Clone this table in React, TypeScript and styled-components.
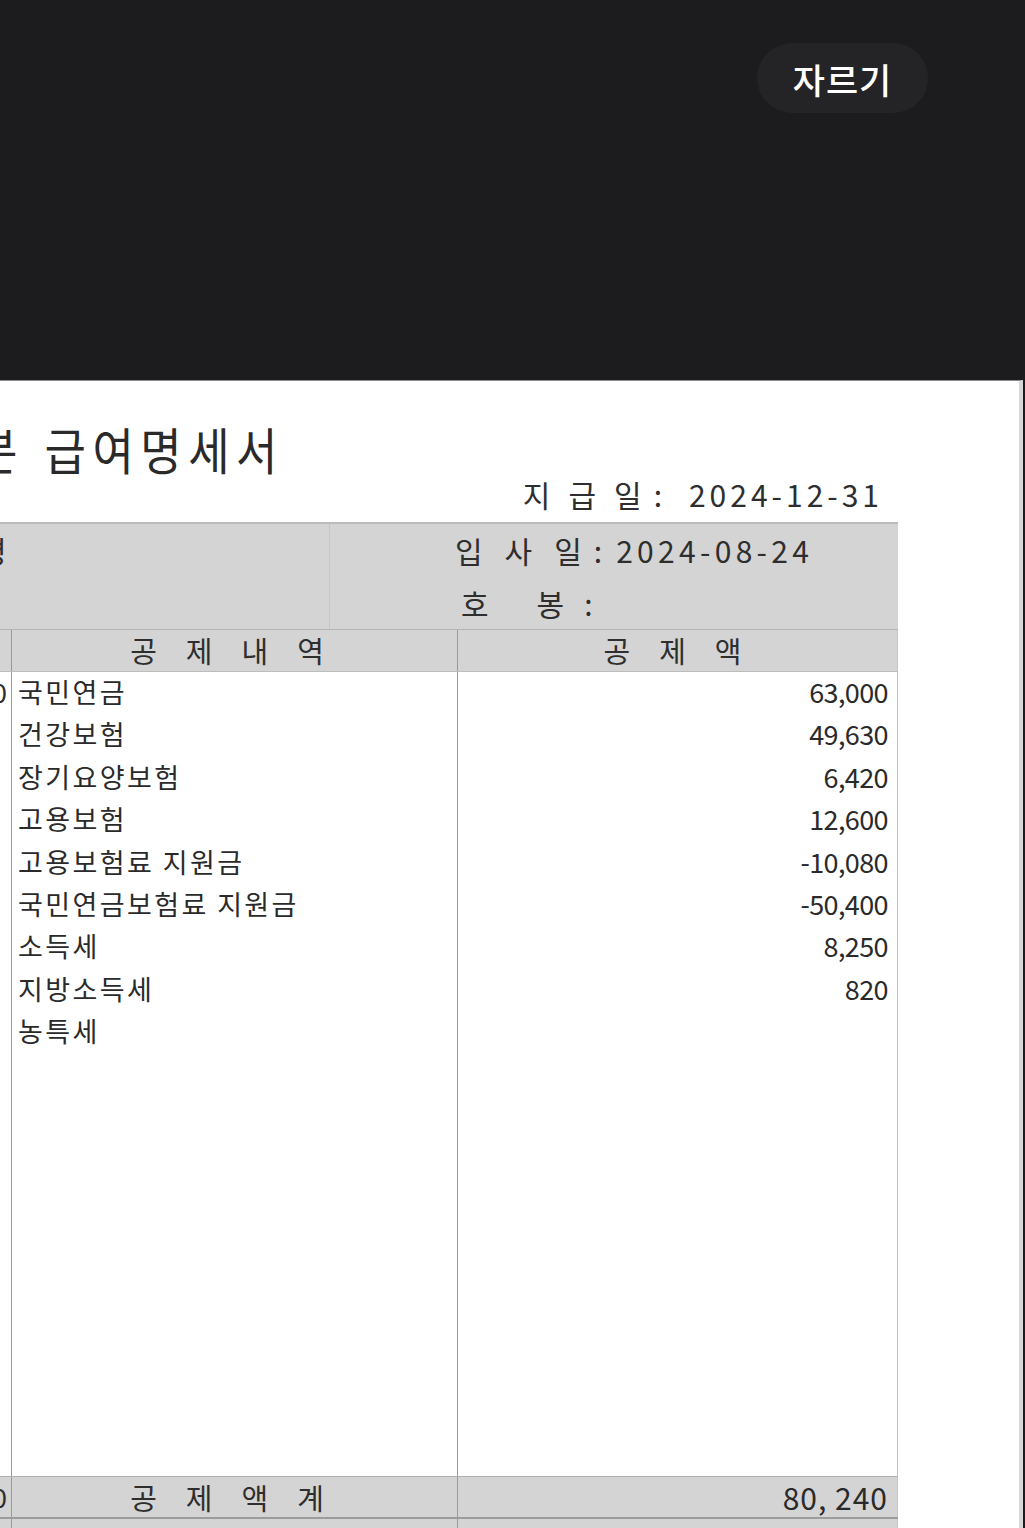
import React from "react";
import styled, { createGlobalStyle } from "styled-components";

const Global = createGlobalStyle`
  html, body { margin: 0; padding: 0; background: #1c1c1e; }
  body { font-family: "Noto Sans CJK KR", "Noto Sans", sans-serif; }
  * { box-sizing: border-box; }
`;

const Screen = styled.div`
  width: 1025px;
  height: 1528px;
  overflow: hidden;
  background: #1c1c1e;
  display: flex;
  flex-direction: column;
`;

const TopBar = styled.header`
  height: 380px;
  flex-shrink: 0;
  display: flex;
  justify-content: flex-end;
  align-items: flex-start;
  padding: 43px 97px 0 0;
`;

const CropButton = styled.button`
  width: 171px;
  height: 70px;
  border-radius: 35px;
  border: none;
  background: #242426;
  color: #ffffff;
  font-family: "Noto Sans CJK KR", sans-serif;
  font-size: 35px;
  font-weight: 500;
  letter-spacing: 1px;
  padding: 0;
`;

const Paper = styled.main`
  flex: 1;
  background: #ffffff;
  border-top: 1px solid #8e8e8e;
  border-right: 4px solid #d8d8d8;
  margin-right: 2px;
  overflow: hidden;
  color: #2e2e2e;
`;

const Sheet = styled.div`
  margin-left: -100px;
  width: 998px;
`;

const TitleRow = styled.h1`
  margin: 42px 0 0;
  padding-left: 76px;
  height: 53px;
  font-size: 45px;
  font-weight: 400;
  line-height: 53px;
  white-space: nowrap;
  color: #2a2a2a;
`;

const TitleText = styled.span`
  display: inline-block;
  letter-spacing: 6.5px;
  word-spacing: 4px;
  transform: scaleY(1.1);
  transform-origin: 50% 60%;
`;

const PayDate = styled.div`
  display: flex;
  justify-content: flex-end;
  align-items: baseline;
  padding-right: 15px;
  margin-bottom: 10px;
  font-size: 30px;
  line-height: 36px;
  color: #2e2e2e;
  white-space: pre;
`;

const Label = styled.span<{ $gap: number }>`
  display: inline-flex;
  gap: ${(p) => p.$gap}px;
`;

const Colon = styled.span<{ $before: number; $after: number }>`
  margin-left: ${(p) => p.$before}px;
  margin-right: ${(p) => p.$after}px;
`;

const Value = styled.span<{ $gap: number }>`
  letter-spacing: ${(p) => p.$gap}px;
`;

const InfoBlock = styled.section`
  display: grid;
  grid-template-columns: 430px 568px;
  background: #d4d4d4;
  border-top: 2px solid #bcbcbc;
  border-bottom: 1px solid #b4b4b4;
`;

const InfoLeft = styled.div`
  border-right: 1px solid #c6c6c6;
  padding-left: 79px;
  font-size: 30px;
  line-height: 52px;
  color: #2e2e2e;
`;

const InfoRight = styled.div`
  padding-left: 125px;
  display: flex;
  flex-direction: column;
`;

const InfoLine = styled.div<{ $indent?: number }>`
  height: 52.5px;
  display: flex;
  align-items: center;
  padding-left: ${(p) => p.$indent || 0}px;
  font-size: 30px;
  white-space: pre;
  color: #2e2e2e;
`;

const Row = styled.div<{ $shade?: boolean; $h: number }>`
  display: grid;
  grid-template-columns: 112px 446px 440px;
  height: ${(p) => p.$h}px;
  background: ${(p) => (p.$shade ? "#d4d4d4" : "#ffffff")};
`;

const HeadRow = styled(Row)`
  border-bottom: 1px solid #bdbdbd;
`;

const TotalRow = styled(Row)`
  border-top: 1px solid #b0b0b0;
  border-bottom: 2px solid #9c9c9c;
`;

const Cell = styled.div<{ $line?: "left" | "right" | "none" }>`
  border-right: ${(p) =>
    p.$line === "none" ? "none" : p.$line === "right" ? "1px solid #c4c4c4" : "1.5px solid #9a9a9a"};
  display: flex;
  flex-direction: column;
  overflow: hidden;
`;

const HeadText = styled.div<{ $shift: number }>`
  text-align: center;
  padding-left: ${(p) => p.$shift}px;
  font-size: 29px;
  line-height: 40px;
  letter-spacing: 29px;
  color: #2e2e2e;
  white-space: nowrap;
`;

const Body = styled.div`
  margin-top: -1px;
`;

const Line = styled.div`
  height: 42.4px;
  line-height: 42.4px;
  font-size: 27px;
  letter-spacing: 2.4px;
  white-space: nowrap;
  color: #2a2a2a;
  padding-left: 6px;
`;

const Amount = styled.div`
  height: 42.4px;
  line-height: 42.4px;
  font-size: 27px;
  letter-spacing: -0.6px;
  white-space: nowrap;
  color: #2a2a2a;
  text-align: right;
  padding-right: 9px;
`;

const Cut = styled.div<{ $h: number }>`
  text-align: right;
  padding-right: 104px;
  margin-right: -100px;
  font-size: 27px;
  line-height: ${(p) => p.$h}px;
  color: #2e2e2e;
`;

const TotalAmount = styled.div`
  text-align: right;
  padding-right: 9px;
  font-size: 30px;
  line-height: 40px;
  letter-spacing: 1px;
  color: #2a2a2a;
`;

const items: [string, string][] = [
  ["국민연금", "63,000"],
  ["건강보험", "49,630"],
  ["장기요양보험", "6,420"],
  ["고용보험", "12,600"],
  ["고용보험료 지원금", "-10,080"],
  ["국민연금보험료 지원금", "-50,400"],
  ["소득세", "8,250"],
  ["지방소득세", "820"],
  ["농특세", ""],
];

function Spread({ text, gap }: { text: string; gap: number }) {
  return (
    <Label $gap={gap}>
      {Array.from(text).map((c, i) => (
        <span key={i}>{c}</span>
      ))}
    </Label>
  );
}

export default function App() {
  return (
    <>
      <Global />
      <Screen>
        <TopBar>
          <CropButton>자르기</CropButton>
        </TopBar>
        <Paper>
          <Sheet>
            <TitleRow>
              <TitleText>분 급여명세서</TitleText>
            </TitleRow>
            <PayDate>
              <Spread text="지급일" gap={18} />
              <Colon $before={12} $after={27}>:</Colon>
              <Value $gap={4}>2024-12-31</Value>
            </PayDate>
            <InfoBlock>
              <InfoLeft>명</InfoLeft>
              <InfoRight>
                <InfoLine>
                  <Spread text="입사일" gap={22} />
                  <Colon $before={12} $after={14}>:</Colon>
                  <Value $gap={4.3}>2024-08-24</Value>
                </InfoLine>
                <InfoLine $indent={6}>
                  <Spread text="호봉" gap={48} />
                  <Colon $before={20} $after={0}>:</Colon>
                </InfoLine>
              </InfoRight>
            </InfoBlock>
            <HeadRow $shade $h={42}>
              <Cell />
              <Cell>
                <HeadText $shift={14}>공제내역</HeadText>
              </Cell>
              <Cell $line="right">
                <HeadText $shift={19}>공제액</HeadText>
              </Cell>
            </HeadRow>
            <Row $h={804}>
              <Cell>
                <Body>
                  <Cut $h={42.4}>0</Cut>
                </Body>
              </Cell>
              <Cell>
                <Body>
                  {items.map(([name]) => (
                    <Line key={name}>{name}</Line>
                  ))}
                </Body>
              </Cell>
              <Cell $line="right">
                <Body>
                  {items.map(([name, amt]) => (
                    <Amount key={name}>{amt}</Amount>
                  ))}
                </Body>
              </Cell>
            </Row>
            <TotalRow $shade $h={43}>
              <Cell>
                <Cut $h={40}>0</Cut>
              </Cell>
              <Cell>
                <HeadText $shift={14}>공제액계</HeadText>
              </Cell>
              <Cell $line="right">
                <TotalAmount>80, 240</TotalAmount>
              </Cell>
            </TotalRow>
            <Row $shade $h={60}>
              <Cell />
              <Cell />
              <Cell $line="right" />
            </Row>
          </Sheet>
        </Paper>
      </Screen>
    </>
  );
}
